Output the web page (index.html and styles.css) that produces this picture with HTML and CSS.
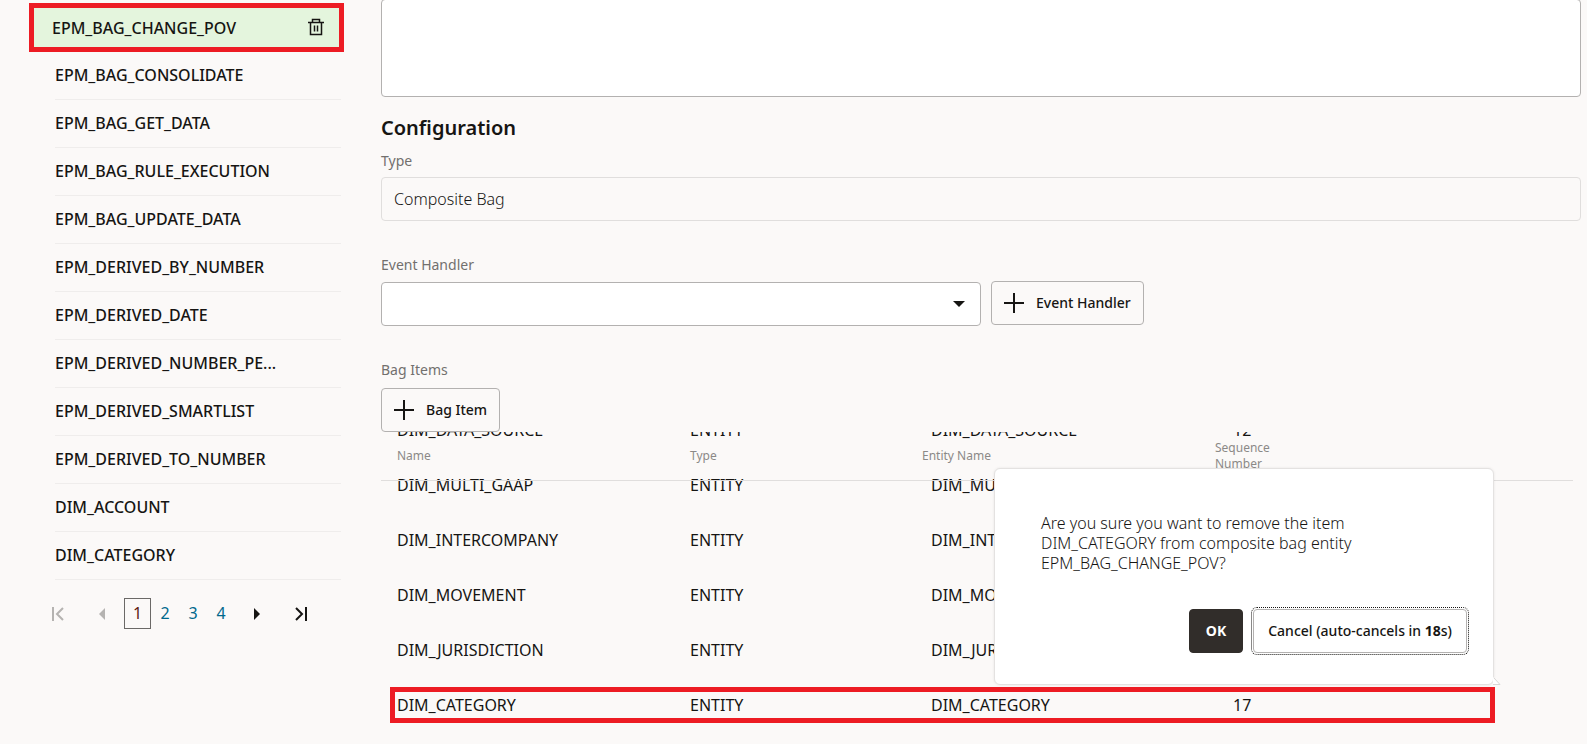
FILE: index.html
```html
<!DOCTYPE html>
<html lang="en">
<head>
<meta charset="utf-8">
<meta name="viewport" content="width=device-width, initial-scale=1">
<title>EPM_BAG_CHANGE_POV</title>
<link rel="stylesheet" href="styles.css">
</head>
<body>
<div class="layout">
  <aside class="sidebar">
    <ul class="entities">
      <li class="entity entity-selected">
        <span class="entity-name">EPM_BAG_CHANGE_POV</span>
        <button class="icon-button" type="button" aria-label="Delete">
          <svg width="18" height="18" viewBox="0 0 18 18" fill="none" stroke="#161513" stroke-width="1.5"><path d="M1 4.5H17M5.500 4.500V1.500H12.500V4.500M3.500 4.500V16.500H14.500V4.500M7.500 7.500V13.500M10.500 7.500V13.500"/></svg>
        </button>
      </li>
      <li class="entity"><span class="entity-name">EPM_BAG_CONSOLIDATE</span></li>
      <li class="entity"><span class="entity-name">EPM_BAG_GET_DATA</span></li>
      <li class="entity"><span class="entity-name">EPM_BAG_RULE_EXECUTION</span></li>
      <li class="entity"><span class="entity-name">EPM_BAG_UPDATE_DATA</span></li>
      <li class="entity"><span class="entity-name">EPM_DERIVED_BY_NUMBER</span></li>
      <li class="entity"><span class="entity-name">EPM_DERIVED_DATE</span></li>
      <li class="entity"><span class="entity-name">EPM_DERIVED_NUMBER_PE...</span></li>
      <li class="entity"><span class="entity-name">EPM_DERIVED_SMARTLIST</span></li>
      <li class="entity"><span class="entity-name">EPM_DERIVED_TO_NUMBER</span></li>
      <li class="entity"><span class="entity-name">DIM_ACCOUNT</span></li>
      <li class="entity"><span class="entity-name">DIM_CATEGORY</span></li>
    </ul>
    <nav class="pager" aria-label="Pages">
      <button class="pager-arrow" type="button" disabled aria-label="First page"><svg width="14" height="14" viewBox="0 0 14 14" fill="none" stroke="#b5b3b1" stroke-width="2"><path d="M2 0V14M12 1L6 7L12 13"/></svg></button>
      <button class="pager-arrow" type="button" disabled aria-label="Previous page"><svg width="6" height="12" viewBox="0 0 6 12" fill="#b5b3b1"><path d="M6 0V12L0 6Z"/></svg></button>
      <a class="page page-current" href="#1" aria-current="page">1</a>
      <a class="page" href="#2">2</a>
      <a class="page" href="#3">3</a>
      <a class="page" href="#4">4</a>
      <button class="pager-arrow" type="button" aria-label="Next page"><svg width="6" height="12" viewBox="0 0 6 12" fill="#161513"><path d="M0 0V12L6 6Z"/></svg></button>
      <button class="pager-arrow" type="button" aria-label="Last page"><svg width="14" height="14" viewBox="0 0 14 14" fill="none" stroke="#161513" stroke-width="2"><path d="M12 0V14M2 1L8 7L2 13"/></svg></button>
    </nav>
  </aside>

  <main class="main">
    <textarea class="description" aria-label="Description"></textarea>
    <h2 class="heading">Configuration</h2>
    <label class="label" for="type">Type</label>
    <input class="input" id="type" type="text" value="Composite Bag" readonly>

    <label class="label label-spaced" for="handler">Event Handler</label>
    <div class="handler-row">
      <div class="select-wrap">
        <select class="select" id="handler"><option></option></select>
        <svg class="select-arrow" width="12" height="6" viewBox="0 0 12 6" fill="#161513"><path d="M0 0H12L6 6Z"/></svg>
      </div>
      <button class="button" type="button">
        <svg width="20" height="20" viewBox="0 0 20 20" stroke="#161513" stroke-width="2"><path d="M10 0V20M0 10H20"/></svg>
        Event Handler
      </button>
    </div>

    <p class="label label-items">Bag Items</p>
    <button class="button" type="button">
      <svg width="20" height="20" viewBox="0 0 20 20" stroke="#161513" stroke-width="2"><path d="M10 0V20M0 10H20"/></svg>
      Bag Item
    </button>

    <div class="items">
      <div class="items-view">
        <table class="table">
          <thead class="table-head">
            <tr class="row"><th>Name</th><th>Type</th><th>Entity Name</th><th>Sequence<br>Number</th></tr>
          </thead>
          <tbody class="table-body">
            <tr class="row"><td>DIM_DATA_SOURCE</td><td>ENTITY</td><td>DIM_DATA_SOURCE</td><td>12</td></tr>
            <tr class="row"><td>DIM_MULTI_GAAP</td><td>ENTITY</td><td>DIM_MULTI_GAAP</td><td>13</td></tr>
            <tr class="row"><td>DIM_INTERCOMPANY</td><td>ENTITY</td><td>DIM_INTERCOMPANY</td><td>14</td></tr>
            <tr class="row"><td>DIM_MOVEMENT</td><td>ENTITY</td><td>DIM_MOVEMENT</td><td>15</td></tr>
            <tr class="row"><td>DIM_JURISDICTION</td><td>ENTITY</td><td>DIM_JURISDICTION</td><td>16</td></tr>
            <tr class="row row-marked"><td>DIM_CATEGORY</td><td>ENTITY</td><td>DIM_CATEGORY</td><td>17</td></tr>
          </tbody>
        </table>
      </div>
      <div class="dialog" role="dialog" aria-labelledby="question">
        <p class="question" id="question">Are you sure you want to remove the item<br>DIM_CATEGORY from composite bag entity<br>EPM_BAG_CHANGE_POV?</p>
        <div class="actions">
          <button class="button button-ok" type="button">OK</button>
          <button class="button button-cancel" type="button"><span>Cancel (auto-cancels in <b>18</b>s)</span></button>
        </div>
        <svg class="tail" width="9" height="9" viewBox="0 0 9 9"><path d="M0 0L7 7.500H0Z" fill="#fff"/><path d="M1 1L7 7.500H0" fill="none" stroke="#d9d7d6"/></svg>
      </div>
    </div>
  </main>
</div>
</body>
</html>
```
FILE: styles.css
```css
* {
  box-sizing: border-box;
}

body {
  margin: 0;
  background: #fbf9f8;
  color: #161513;
  font: 16px/20px "Noto Sans", "Open Sans", sans-serif;
}

button,
input,
select,
textarea {
  font: inherit;
  color: inherit;
}

.layout {
  display: flex;
  align-items: flex-start;
  min-height: 100vh;
  overflow: hidden;
}

/* Sidebar */
.sidebar {
  flex: 0 0 381px;
  padding: 3px 40px 0 55px;
}

.entities {
  margin: 0;
  padding: 0;
  list-style: none;
}

.entity {
  display: flex;
  align-items: center;
  justify-content: space-between;
  height: 48px;
  padding-bottom: 2px;
  border-bottom: 1px solid #efedec;
  font-weight: 500;
}

.entity-selected {
  height: 49px;
  margin: 0 -3px 0 -26px;
  padding: 0 14px 0 18px;
  border: 5px solid #ed1c24;
  background: #e4f5dd;
}

.icon-button,
.pager-arrow {
  display: flex;
  align-items: center;
  justify-content: center;
  padding: 0;
  border: 0;
  background: none;
}

.icon-button {
  padding-bottom: 2px;
}

.pager {
  display: flex;
  align-items: center;
  margin: 18px 0 0 -19px;
}

.pager-arrow {
  flex: 0 0 44px;
  height: 31px;
}

.page {
  flex: 0 0 28px;
  line-height: 31px;
  text-align: center;
  text-decoration: none;
  color: #00688c;
}

.page-current {
  flex-basis: 27px;
  border: 1px solid #6b6967;
  line-height: 29px;
  color: #5f1a10;
}

/* Form */
.main {
  flex: 1;
  min-width: 0;
  padding-right: 6px;
}

.description {
  display: block;
  width: 100%;
  height: 98px;
  margin-top: -1px;
  border: 1px solid #b3b1b0;
  border-radius: 4px;
  background: #fff;
  resize: none;
}

.heading {
  margin: 19px 0 12px;
  font-size: 20px;
  font-weight: 600;
  line-height: 24px;
}

.label {
  display: block;
  margin: 0 0 7px;
  font-size: 14px;
  line-height: 18px;
  color: #72706e;
}

.label-spaced {
  margin-top: 35px;
}

.label-items {
  margin: 35px 0 9px;
}

.input,
.select {
  display: block;
  width: 100%;
  height: 44px;
  padding: 0 12px;
  border: 1px solid #e0dedd;
  border-radius: 4px;
  background: transparent;
}

.input,
.question {
  font-weight: 300;
}

.select {
  appearance: none;
  border-color: #b3b1b0;
  background: #fff;
}

.handler-row {
  display: flex;
  align-items: flex-start;
  gap: 10px;
}

.select-wrap {
  position: relative;
  flex: 0 0 50%;
  padding-top: 1px;
}

.select-arrow {
  position: absolute;
  top: 20px;
  right: 16px;
  pointer-events: none;
}

.button {
  display: inline-flex;
  align-items: center;
  gap: 12px;
  height: 44px;
  padding: 0 12px;
  border: 1px solid #b3b1b0;
  border-radius: 4px;
  background: transparent;
  font-size: 14px;
  font-weight: 500;
  white-space: nowrap;
}

.main > .button {
  display: flex;
}

/* Bag items */
.items {
  position: relative;
  margin-right: 8px;
}

.items-view {
  overflow: hidden;
}

.table,
.table-head,
.table-body {
  display: block;
}

.table-head {
  position: absolute;
  top: 0;
  left: 0;
  right: 0;
  border-bottom: 1px solid #e0dedd;
}

.table-body {
  margin-top: -29px;
}

.row {
  display: grid;
  grid-template-columns: 293fr 232fr 293fr 374fr;
  align-items: center;
  height: 55px;
}

.row th,
.row td {
  padding: 0 0 0 16px;
  text-align: left;
}

.table-body td {
  padding-bottom: 2px;
}

.row td:nth-child(3) {
  padding-left: 25px;
}

.row td:nth-child(4) {
  padding-left: 34px;
}

.table-head .row {
  height: 48px;
  font-size: 12px;
  line-height: 16px;
  color: #8b8987;
}

.table-head th {
  font-weight: 400;
}

.row-marked {
  position: relative;
}

.row-marked::after {
  content: "";
  position: absolute;
  inset: 9px 78px 10px 9px;
  border: 5px solid #ed1c24;
}

/* Confirmation */
.dialog {
  position: absolute;
  right: 79px;
  bottom: 48px;
  width: 500px;
  padding: 44px 26px 31px 46px;
  border: 1px solid #e4e2e1;
  border-radius: 6px;
  background: #fff;
  box-shadow: 0 0 3px rgba(0, 0, 0, 0.08);
}

.question {
  margin: 0 0 36px;
}

.actions {
  display: flex;
  justify-content: flex-end;
  gap: 10px;
}

.button-ok {
  padding: 0 16px;
  border-color: #312d2a;
  background: #312d2a;
  color: #fff;
  font-weight: 700;
}

.button-cancel {
  padding: 0 14px;
  outline: 1px dotted #161513;
  outline-offset: 1px;
}

.tail {
  position: absolute;
  right: -9px;
  bottom: -2px;
}
```
